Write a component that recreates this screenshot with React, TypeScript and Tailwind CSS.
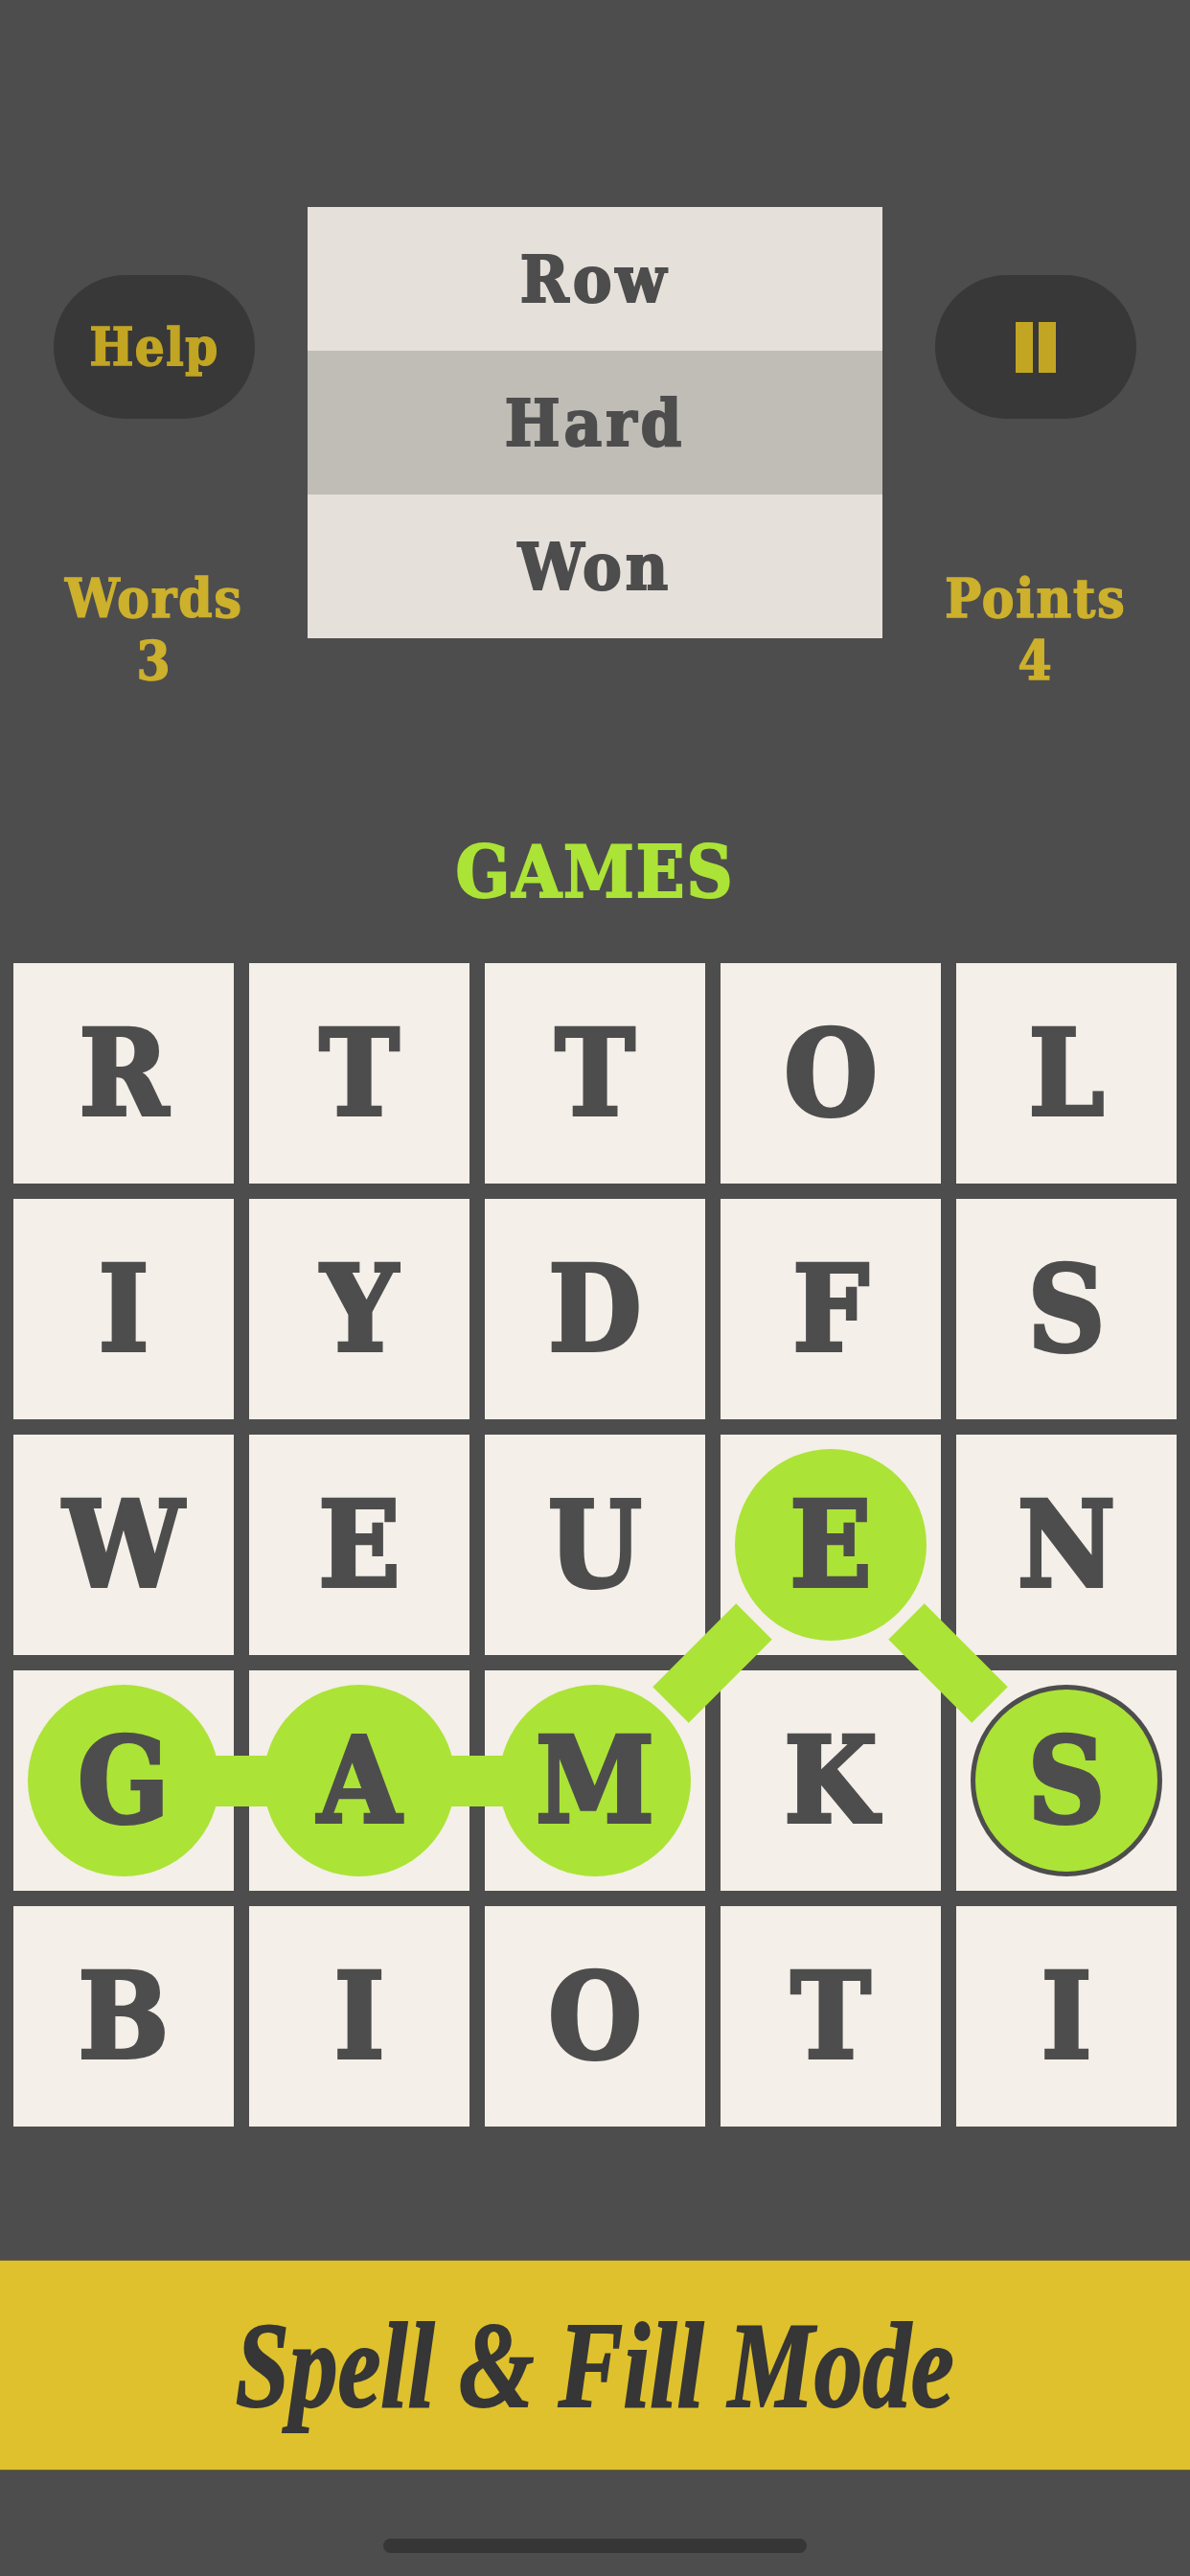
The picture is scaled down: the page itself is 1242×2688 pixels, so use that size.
const letters = ["R","T","T","O","L","I","Y","D","F","S","W","E","U","E","N","G","A","M","K","S","B","I","O","T","I"];
const selected = [13, 15, 16, 17, 19];
const slab = "font-['DejaVu_Serif_Condensed','DejaVu_Serif',serif] font-bold";

function Stat({ label, value }: { label: string; value: number }) {
  return (
    <div className={`${slab} mt-[155px] text-center text-[56px] leading-[65px] tracking-[2px] text-[#cdb02c] [-webkit-text-stroke:1.5px_#cdb02c]`}>
      <div>{label}</div>
      <div>{value}</div>
    </div>
  );
}

function Link({ className }: { className: string }) {
  return <div className={`absolute z-[5] h-[53px] w-[123px] bg-[#ace337] ${className}`} />;
}

export default function App() {
  return (
    <div className="flex h-[2688px] w-[1242px] flex-col overflow-hidden bg-[#4d4d4d]">
      <div className="flex justify-between px-[56px] pt-[216px]">
        <div className="w-[210px]">
          <div className={`${slab} mt-[71px] flex h-[150px] items-center justify-center rounded-[75px] bg-[#383838] text-[54px] tracking-[1.5px] text-[#c2a523] [-webkit-text-stroke:1.5px_#c2a523]`}>
            Help
          </div>
          <Stat label="Words" value={3} />
        </div>
        <div className={`${slab} w-[600px] text-center text-[68px] tracking-[4px] text-[#4d4d4d] [-webkit-text-stroke:2px_#4d4d4d]`}>
          <div className="flex h-[150px] items-center justify-center bg-[#e5e0da]">Row</div>
          <div className="flex h-[150px] items-center justify-center bg-[#c0bdb6]">Hard</div>
          <div className="flex h-[150px] items-center justify-center bg-[#e5e0da]">Won</div>
        </div>
        <div className="w-[210px]">
          <div className="mt-[71px] flex h-[150px] items-center justify-center gap-[6px] rounded-[75px] bg-[#383838]">
            <div className="h-[53px] w-[18px] bg-[#c2a523]" />
            <div className="h-[53px] w-[18px] bg-[#c2a523]" />
          </div>
          <Stat label="Points" value={4} />
        </div>
      </div>

      <div className={`${slab} mt-[144px] text-center text-[74px] leading-[88px] tracking-[2px] text-[#ace337] [-webkit-text-stroke:2px_#ace337]`}>GAMES</div>

      <div className="relative mt-[51px] grid grid-cols-5 gap-4 px-[14px]">
        {letters.map((letter, i) => (
          <div key={i} className="relative flex h-[230px] items-center justify-center bg-[#f4efe8]">
            {selected.includes(i) && (
              <div
                className={`absolute left-[15px] top-[15px] z-10 size-[200px] rounded-full bg-[#ace337] ${
                  i === 19 ? "border-[5px] border-[#4d4d4d]" : ""
                }`}
              />
            )}
            <span className={`${slab} relative z-20 text-[124px] leading-none text-[#4d4d4d] [-webkit-text-stroke:4px_#4d4d4d]`}>{letter}</span>
          </div>
        ))}
        <Link className="left-[190.5px] top-[826.5px]" />
        <Link className="left-[436.5px] top-[826.5px]" />
        <Link className="left-[681.5px] top-[703.5px] -rotate-45" />
        <Link className="left-[927.5px] top-[703.5px] rotate-45" />
      </div>

      <div className="mt-[139px] flex h-[220px] items-center justify-center border-y border-[#6b5f2c] bg-[#dec12d]">
        <span className="origin-center scale-x-[0.79] font-['Liberation_Serif',serif] text-[128px] font-bold italic leading-none text-[#363636] [-webkit-text-stroke:2px_#363636]">
          Spell &amp; Fill Mode
        </span>
      </div>

      <div className="mt-[71px] h-[15px] w-[442px] self-center rounded-full bg-[#363636]" />
    </div>
  );
}
